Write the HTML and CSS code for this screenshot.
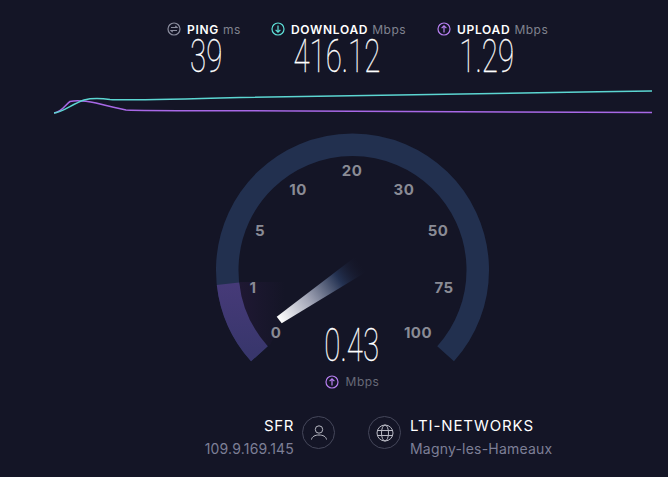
FILE: index.html
```html
<!DOCTYPE html>
<html lang="en">
<head>
<meta charset="utf-8">
<title>Speedtest</title>
<link rel="stylesheet" href="styles.css">
</head>
<body>
<main class="page">
  <header class="stats">
    <section class="stat stat-ping">
      <div class="stat-head">
        <svg class="stat-icon" viewBox="0 0 14 14"><circle cx="7" cy="7" r="6" fill="none" stroke="#8b8d9e" stroke-width="1.2"/><path d="M4 5.500h6L8.300 3.900M10 8.500H4l1.700 1.600" fill="none" stroke="#8b8d9e" stroke-width="1.1"/></svg>
        <span class="stat-name">PING</span><span class="stat-unit">ms</span>
      </div>
      <div class="stat-value"><span class="narrow">39</span></div>
    </section>
    <section class="stat stat-down">
      <div class="stat-head">
        <svg class="stat-icon" viewBox="0 0 14 14"><circle cx="7" cy="7" r="6" fill="none" stroke="#5ee0d8" stroke-width="1.2"/><path d="M7 3.600v6.400M4.600 7.800 7 10.200l2.400-2.400" fill="none" stroke="#5ee0d8" stroke-width="1.2"/></svg>
        <span class="stat-name">DOWNLOAD</span><span class="stat-unit">Mbps</span>
      </div>
      <div class="stat-value"><span class="narrow">416.12</span></div>
    </section>
    <section class="stat stat-up">
      <div class="stat-head">
        <svg class="stat-icon" viewBox="0 0 14 14"><circle cx="7" cy="7" r="6" fill="none" stroke="#b77ff0" stroke-width="1.2"/><path d="M7 10.400V4M4.600 6.200 7 3.800l2.400 2.400" fill="none" stroke="#b77ff0" stroke-width="1.2"/></svg>
        <span class="stat-name">UPLOAD</span><span class="stat-unit">Mbps</span>
      </div>
      <div class="stat-value"><span class="narrow">1.29</span></div>
    </section>
  </header>

  <svg class="graph" viewBox="0 0 668 30" width="668" height="30">
    <path d="M54 18C62 17 66 9 70 6.500C76 5 84 5.500 96 8C108 11 116 13 126 15C150 16 200 15.500 300 16C400 16.500 520 17 652 17.500" fill="none" stroke="#a868e6" stroke-width="1.500"/>
    <path d="M54 18C62 18 72 9 84 5C92 3 98 3 110 4.500C122 5.500 170 4.500 240 2.500C340 0 500 -2 652 -4" fill="none" stroke="#5cd6d2" stroke-width="1.500"/>
  </svg>

  <div class="gauge">
    <svg class="gauge-dial" viewBox="0 0 668 265" width="668" height="265">
      <defs>
        <linearGradient id="needle-fill" gradientUnits="userSpaceOnUse" x1="279" y1="195" x2="362" y2="138">
          <stop offset="0" stop-color="#ffffff"/>
          <stop offset=".35" stop-color="#a4a7b8"/>
          <stop offset=".72" stop-color="#243252"/>
          <stop offset="1" stop-color="#141526" stop-opacity="0"/>
        </linearGradient>
        <linearGradient id="arc-fill" x1="0" y1="0" x2="0" y2="1">
          <stop offset="0" stop-color="#463a78"/>
          <stop offset="1" stop-color="#38366c"/>
        </linearGradient>
        <linearGradient id="glow-fill" gradientUnits="userSpaceOnUse" x1="238" y1="190" x2="285" y2="190">
          <stop offset="0" stop-color="#1f1833"/>
          <stop offset="1" stop-color="#141526"/>
        </linearGradient>
      </defs>
      <path d="M259.400 228.800A125.250 125.250 0 1 1 445.600 228.800" fill="none" stroke="#22304f" stroke-width="22.500"/>
      <path d="M240 157V222L270 220L295 170L290 157Z" fill="url(#glow-fill)"/>
      <path d="M259.400 228.800A125.250 125.250 0 0 1 228 158.700" fill="none" stroke="url(#arc-fill)" stroke-width="22.500"/>
      <path d="M276.700 191.700 281.700 198.300 366 147 355 132Z" fill="url(#needle-fill)"/>
      <g class="ticks">
        <text x="276" y="213">0</text>
        <text x="253" y="168">1</text>
        <text x="260" y="111">5</text>
        <text x="298" y="70">10</text>
        <text x="352" y="51">20</text>
        <text x="404" y="70">30</text>
        <text x="438" y="111">50</text>
        <text x="444" y="168">75</text>
        <text x="418" y="213">100</text>
      </g>
    </svg>
    <div class="readout">
      <div class="readout-value"><span class="narrow">0.43</span></div>
      <div class="readout-unit">
        <svg class="stat-icon" viewBox="0 0 14 14"><circle cx="7" cy="7" r="6" fill="none" stroke="#b77ff0" stroke-width="1.200"/><path d="M7 10.400V4M4.600 6.200 7 3.800l2.400 2.400" fill="none" stroke="#b77ff0" stroke-width="1.200"/></svg>
        <span>Mbps</span>
      </div>
    </div>
  </div>

  <footer class="servers">
    <div class="server-text server-left">
      <div class="server-name">SFR</div>
      <div class="server-detail">109.9.169.145</div>
    </div>
    <div class="server-badge">
      <svg viewBox="0 0 20 20" width="20" height="20"><circle cx="10" cy="6.500" r="3.700" fill="none" stroke="#b9bac4" stroke-width="1"/><path d="M2.500 16.500C3 13.500 6 12 10 12s7 1.500 7.500 4.500" fill="none" stroke="#b9bac4" stroke-width="1"/></svg>
    </div>
    <div class="server-badge server-badge-globe">
      <svg viewBox="0 0 20 20" width="20" height="20"><g fill="none" stroke="#b9bac4" stroke-width="1"><circle cx="10" cy="10" r="8"/><ellipse cx="10" cy="10" rx="3.500" ry="8"/><path d="M2.600 7.500h14.800M2.600 12.500h14.800"/></g></svg>
    </div>
    <div class="server-text">
      <div class="server-name">LTI-NETWORKS</div>
      <div class="server-detail">Magny-les-Hameaux</div>
    </div>
  </footer>
</main>
</body>
</html>
```

FILE: styles.css
```css
* {
  box-sizing: border-box;
}

html,
body {
  margin: 0;
  height: 100%;
  overflow: hidden;
  background: #141526;
}

body {
  font-family: Inter, "Noto Sans", sans-serif;
  color: #fff;
}

.page {
  width: 668px;
  height: 477px;
  display: flex;
  flex-direction: column;
}

.stats {
  display: flex;
  flex: none;
  padding: 21px 0 0 167px;
  height: 85px;
}

.stat {
  display: flex;
  flex-direction: column;
  align-items: center;
}

.stat-ping {
  width: 74px;
  margin-right: 30px;
}

.stat-down {
  width: 136px;
  margin-right: 30px;
}

.stat-up {
  width: 111px;
}

.stat-head {
  display: flex;
  align-items: center;
  height: 16px;
  width: 100%;
  white-space: nowrap;
}

.stat-icon {
  width: 14px;
  height: 14px;
  flex: none;
}

.stat-name {
  margin-left: 6px;
  font-size: 12px;
  font-weight: 600;
  letter-spacing: 0.7px;
  color: #fff;
}

.stat-unit {
  margin-left: 4px;
  font-size: 12px;
  letter-spacing: 0.5px;
  color: #80838f;
}

.stat-value,
.readout-value {
  font-family: Roboto, sans-serif;
  font-weight: 100;
  font-size: 46px;
  line-height: 36px;
}

.stat-value {
  margin-top: 1px;
}

.stat-ping .stat-value {
  margin-left: 5px;
}

.stat-down .stat-value {
  margin-right: 4px;
}

.stat-up .stat-value {
  margin-right: 11px;
}

.narrow {
  display: inline-block;
  transform: scaleX(0.64);
  -webkit-text-stroke: 0.3px #fff;
}

.graph {
  display: block;
  flex: none;
  overflow: visible;
  margin-top: 10px;
}

.gauge {
  position: relative;
  flex: none;
  height: 290px;
}

.gauge-dial {
  display: block;
  overflow: visible;
}

.ticks text {
  font-family: Inter, sans-serif;
  font-size: 15px;
  font-weight: 700;
  letter-spacing: 0.5px;
  fill: #8a8b95;
  text-anchor: middle;
}

.readout {
  position: absolute;
  left: 302px;
  top: 202px;
  width: 100px;
  display: flex;
  flex-direction: column;
  align-items: center;
}

.readout-unit {
  display: flex;
  align-items: center;
  gap: 7px;
  margin-top: 11px;
  font-size: 12px;
  letter-spacing: 0.5px;
  color: #686a78;
}

.servers {
  display: flex;
  flex: none;
  height: 50px;
}

.server-text {
  white-space: nowrap;
}

.server-left {
  width: 294px;
  text-align: right;
}

.server-name {
  font-size: 15px;
  letter-spacing: 0.9px;
  line-height: 22px;
  color: #fff;
}

.server-left .server-name {
  letter-spacing: 0.6px;
}

.server-detail {
  font-size: 14px;
  letter-spacing: 0.2px;
  line-height: 24px;
  color: #7d7f96;
}

.server-badge {
  width: 33px;
  height: 33px;
  margin: 1px 0 0 8px;
  border: 1px solid #45475a;
  border-radius: 50%;
  display: flex;
  align-items: center;
  justify-content: center;
}

.server-badge-globe {
  margin: 1px 9px 0 33px;
}
```
